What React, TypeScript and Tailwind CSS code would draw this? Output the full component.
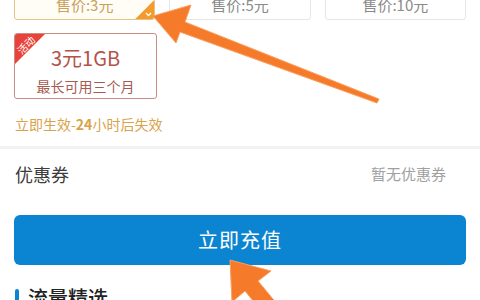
import React from "react";

const font = { fontFamily: '"Noto Sans CJK SC", "Noto Sans", sans-serif' };

export default function App() {
  return (
    <div className="relative w-[480px] h-[300px] overflow-hidden bg-white" style={font}>
      <div className="flex flex-col">
        {/* top price row */}
        <div className="grid grid-cols-3 gap-[14px] px-[14px] mt-[-11px]">
          <div className="relative h-[31px] rounded-[3px] border border-[#e5c384] bg-[#fffdf6] flex items-center justify-center overflow-hidden">
            <span className="text-[15px] leading-none text-[#c9a15c] mt-[-1px]">售价:3元</span>
            <div className="absolute right-0 bottom-0 w-[19px] h-[19px] bg-[#f39b2c] [clip-path:polygon(100%_0,100%_100%,0_100%)]" />
            <svg className="absolute right-[2px] bottom-[2px]" width="7" height="5" viewBox="0 0 7 5">
              <path d="M1 1 L3.5 3.5 L6 1" stroke="#fff" strokeWidth="1.3" fill="none" />
            </svg>
          </div>
          <div className="h-[31px] rounded-[3px] border border-[#e6e6e6] flex items-center justify-center">
            <span className="text-[15px] leading-none text-[#8a8a8a] mt-[-1px]">售价:5元</span>
          </div>
          <div className="h-[31px] rounded-[3px] border border-[#e6e6e6] flex items-center justify-center">
            <span className="text-[15px] leading-none text-[#8a8a8a] mt-[-1px]">售价:10元</span>
          </div>
        </div>

        {/* activity card */}
        <div className="px-[14px] mt-[13px]">
          <div className="relative w-[143px] h-[66px] rounded-[3px] border border-[#c98d84] flex flex-col items-center overflow-hidden">
            <div className="absolute left-0 top-0 w-[30px] h-[30px] bg-[#e8433a] [clip-path:polygon(0_0,100%_0,0_100%)]" />
            <span className="absolute left-[1px] top-[6px] text-[10px] leading-none text-white -rotate-45">活动</span>
            <span className="text-[20px] leading-none text-[#b2544b] mt-[14px]">3元1GB</span>
            <span className="text-[14px] leading-none text-[#a65a51] mt-[11px]">最长可用三个月</span>
          </div>
        </div>

        <div className="px-[15px] mt-[18px] text-[14px] leading-none text-[#d9a34b]">
          立即生效-<span className="font-bold">24</span>小时后失效
        </div>

        <div className="mt-[15px] h-[3px] bg-[#f2f2f2]" />

        <div className="flex items-center justify-between pl-[15px] pr-[34px] h-[50px]">
          <span className="text-[18px] text-[#3d3d3d]">优惠券</span>
          <span className="text-[15px] text-[#a0a0a0]">暂无优惠券</span>
        </div>

        <div className="mx-[14px] mt-[16px] h-[50px] rounded-[6px] bg-[#0b85d1] flex items-center justify-center">
          <span className="text-[20px] text-white tracking-[1px]">立即充值</span>
        </div>

        <div className="flex items-center mt-[20px] pl-[15px] gap-[9px]">
          <div className="w-[4px] h-[18px] rounded-[2px] bg-[#0b85d1]" />
          <span className="text-[20px] leading-[26px] text-[#222] font-medium">流量精选</span>
        </div>
      </div>

      {/* annotation arrows */}
      <svg className="absolute inset-0 pointer-events-none" width="480" height="300" viewBox="0 0 480 300">
        <polygon
          points="153,16 191,5 185,22 379,99 377,103 180,32 176,43"
          fill="#f57a2a"
          stroke="#f9a060"
          strokeWidth="1"
          strokeLinejoin="round"
        />
        <polygon
          points="230,260 271,271 258,281 322,358 308,368 245,291 232,302"
          fill="#f57a2a"
          stroke="#f9a060"
          strokeWidth="1"
          strokeLinejoin="round"
        />
      </svg>
    </div>
  );
}
